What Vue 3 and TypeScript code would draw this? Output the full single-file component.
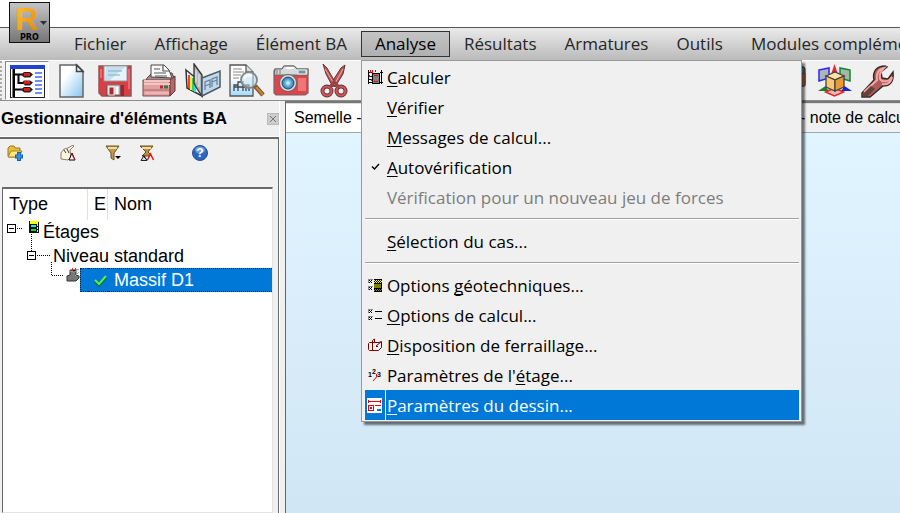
<script setup lang="ts">
import { ref } from 'vue'

interface MenuEntry {
  before: string
  key: string
  after: string
  icon?: string
  disabled?: boolean
}

const menus: string[] = ['Fichier', 'Affichage', 'Élément BA', 'Analyse', 'Résultats', 'Armatures', 'Outils', 'Modules compléments']
const openMenu = ref('Analyse')
const current = ref('dessin...')

const groups: MenuEntry[][] = [
  [
    { before: '', key: 'C', after: 'alculer', icon: 'calc' },
    { before: '', key: 'V', after: 'érifier' },
    { before: '', key: 'M', after: 'essages de calcul...' },
    { before: '', key: 'A', after: 'utovérification', icon: 'check' },
    { before: 'Vérification pour un nouveau jeu de forces', key: '', after: '', disabled: true },
  ],
  [{ before: '', key: 'S', after: 'élection du cas...' }],
  [
    { before: 'Options ', key: 'g', after: 'éotechniques...', icon: 'geo' },
    { before: '', key: 'O', after: 'ptions de calcul...', icon: 'options' },
    { before: '', key: 'D', after: 'isposition de ferraillage...', icon: 'rebar' },
    { before: "Paramètres de l'", key: 'é', after: 'tage...', icon: 'storey' },
    { before: '', key: 'P', after: 'aramètres du dessin...', icon: 'drawing' },
  ],
]

function isCurrent(entry: MenuEntry): boolean {
  return entry.after.endsWith(current.value)
}

function toggle(name: string): void {
  openMenu.value = openMenu.value === name ? '' : name
}
</script>

<template>
  <div class="app">
    <header class="title">
      <button class="logo" aria-label="Menu application">
        <svg viewBox="0 0 41 41" width="41" height="41" aria-hidden="true">
          <defs>
            <linearGradient id="logoBg" x1="0" y1="0" x2="0" y2="1">
              <stop offset="0" stop-color="#c6c6c6" /><stop offset="1" stop-color="#747474" />
            </linearGradient>
            <linearGradient id="logoR" x1="0" y1="0" x2="1" y2="1">
              <stop offset="0" stop-color="#ffc52e" /><stop offset=".5" stop-color="#f4a51c" /><stop offset="1" stop-color="#d98005" />
            </linearGradient>
          </defs>
          <rect x=".5" y=".5" width="40" height="40" fill="url(#logoBg)" stroke="#111" />
          <text x="6" y="28" class="logo-r" fill="url(#logoR)">R</text>
          <path d="M31 19h7l-3.500 4z" fill="#27313c" />
          <text x="11" y="38" class="logo-pro">PRO</text>
        </svg>
      </button>
    </header>

    <nav class="menubar">
      <div v-for="name in menus" :key="name" class="menu-slot">
        <button class="menu-button" :class="{ open: openMenu === name }" @click="toggle(name)">{{ name }}</button>
        <div v-if="name === 'Analyse' && openMenu === name" class="dropdown" role="menu">
          <div v-for="(group, g) in groups" :key="g" class="menu-group">
            <button
              v-for="entry in group"
              :key="entry.before + entry.key + entry.after"
              class="entry"
              :class="{ current: isCurrent(entry) }"
              :disabled="entry.disabled"
              role="menuitem"
            >
              <span class="entry-icon">
                <svg v-if="entry.icon === 'calc'" viewBox="0 0 15 15" width="15" height="15" shape-rendering="crispEdges">
                  <path d="M.5 0v14M13.500 0v14M0 2.500h4M12 2.500h3M0 6.500h4M0 9.500h4M0 12.500h15" stroke="#000" fill="none" />
                  <path d="M2.500 0v3M4.500 0v3M7.500 0v2M1.500 5v2M3.500 9v2" stroke="#e00" />
                  <rect x="4.500" y="3.500" width="7" height="10" fill="#808080" stroke="#000" />
                  <path d="M6 5.500h4M6 11.500h4" stroke="#e00" />
                </svg>
                <svg v-else-if="entry.icon === 'check'" viewBox="0 0 15 15" width="15" height="15">
                  <path d="M4 6.500l2.500 2.500L11 4" stroke="#000" stroke-width="1.400" fill="none" />
                </svg>
                <svg v-else-if="entry.icon === 'geo'" viewBox="0 0 15 15" width="15" height="15" shape-rendering="crispEdges">
                  <path d="M0 1.500h5M.5 1v4M0 8.500h5M.5 8v4" stroke="#888" />
                  <path d="M1 2l3 3M4 2l-3 3M1 9l3 3M4 9l-3 3" stroke="#000" />
                  <rect x="6" y="1" width="8" height="13" fill="#000" />
                  <path d="M6 2.500h8M6 4.500h8" stroke="#ff0" stroke-dasharray="1 1" />
                  <path d="M7 3.500h7" stroke="#ff0" stroke-dasharray="1 1" />
                  <rect x="6" y="6" width="7" height="4" fill="#808000" />
                  <path d="M7 11.500h7M6 12.500h8" stroke="#808000" stroke-dasharray="1 1" />
                </svg>
                <svg v-else-if="entry.icon === 'options'" viewBox="0 0 15 15" width="15" height="15" shape-rendering="crispEdges">
                  <path d="M0 1.500h5M.5 1v4M0 8.500h5M.5 8v4" stroke="#888" />
                  <path d="M1 2l3 3M4 2l-3 3M1 9l3 3M4 9l-3 3M7 3.500h7M7 10.500h7" stroke="#000" />
                </svg>
                <svg v-else-if="entry.icon === 'rebar'" viewBox="0 0 15 15" width="15" height="15">
                  <path d="M4.500 12V2.500l2-1.500v3M1.500 4.500H11l2.500-1v6l-3 3h-9l-1-1v-6zM8 8l5-4M8 8.500h2" stroke="#700" fill="none" />
                </svg>
                <svg v-else-if="entry.icon === 'storey'" viewBox="0 0 15 15" width="15" height="15">
                  <text x="0" y="9" class="digit">1</text>
                  <text x="4" y="6" class="digit">2</text>
                  <text x="9" y="9" class="digit">3</text>
                  <path d="M8.500 6v3L5 13" stroke="#e00" fill="none" />
                </svg>
                <svg v-else-if="entry.icon === 'drawing'" viewBox="0 0 15 15" width="15" height="15" shape-rendering="crispEdges">
                  <rect width="15" height="15" fill="#fff" />
                  <path d="M1 3.500h13M1.500 2v3M13.500 2v3M1 7.500h6M1 12.500h6M1.500 7v6M6.500 7v6M3.500 9.500h1v1h-1z" stroke="#e00" fill="none" />
                  <path d="M8 7.500h6" stroke="#e00" fill="none" />
                  <path d="M10 12h4" stroke="#0078d7" stroke-width="2" />
                </svg>
              </span>
              <span class="entry-text">{{ entry.before }}<u v-if="entry.key">{{ entry.key }}</u>{{ entry.after }}</span>
            </button>
          </div>
        </div>
      </div>
    </nav>

    <div class="toolbar" role="toolbar">
      <div class="tools">
        <button class="tool pressed" aria-label="Gestionnaire">
          <svg viewBox="0 0 36 36" width="36" height="36">
            <rect x="1.500" y="2.500" width="34" height="32" fill="#fff" stroke="#222" />
            <rect x="1" y="2" width="35" height="4" fill="#2342d0" />
            <path d="M3.500 6v29" stroke="#777" /><path d="M5 6v28M5 11.500h8M9.500 12v8h5M5 26.500h8" stroke="#000" stroke-width="2" fill="none" />
            <path d="M12 11.500l3-2.500h6l3 2.500-3 3h-6zM13 19.500l2-2h6l3 2-3 3h-5zM12 26.500l3-2.500h6l3 2.500-3 3h-6z" fill="#222" />
            <path d="M15 11.500h6M15 19.500h6M15 26.500h6" stroke="#e01818" stroke-width="3" />
            <path d="M26 10h7M26 14h7M26 18h7M26 22h7M26 26h7M26 30h7" stroke="#6f8ef0" stroke-width="2" />
          </svg>
        </button>
        <button class="tool" aria-label="Nouveau">
          <svg viewBox="0 0 36 36" width="36" height="36">
            <defs><linearGradient id="pg" x1="0" y1="0" x2="1" y2="1"><stop offset=".3" stop-color="#fff" /><stop offset="1" stop-color="#84c4ee" /></linearGradient></defs>
            <path d="M7 2h17l6 6v26H7z" fill="url(#pg)" stroke="#666" stroke-width="1.500" />
            <path d="M23.500 2v6.500H30z" fill="#eee" stroke="#444" stroke-width="1.500" />
          </svg>
        </button>
        <button class="tool" aria-label="Enregistrer">
          <svg viewBox="0 0 36 36" width="36" height="36">
            <path d="M2 3h32v30H5l-3-3z" fill="#db3d45" stroke="#8d585b" stroke-width="1.500" />
            <rect x="7" y="3" width="23" height="15" fill="#e6f4fb" stroke="#999" />
            <path d="M9 4h19l-15 13H8z" fill="#bfe1f3" /><path d="M11 8h14M11 12h12" stroke="#8fa9b5" />
            <path d="M4 6v9M32 6v20" stroke="#f67a7d" stroke-width="1.500" />
            <rect x="9" y="22" width="18" height="11" fill="#9f252c" /><rect x="10" y="22" width="13" height="10" fill="#d8d8d8" stroke="#777" />
            <rect x="12" y="24" width="5" height="8" fill="#aa2931" stroke="#eee" /><path d="M20 24v7" stroke="#fff" stroke-width="2" />
          </svg>
        </button>
        <button class="tool" aria-label="Imprimer">
          <svg viewBox="0 0 36 36" width="36" height="36">
            <path d="M6 15l5-5h20l3 7-4 4H4z" fill="#a68c8c" stroke="#554444" />
            <path d="M10 14V2h13l5 5 3 8z" fill="#fafafa" stroke="#444" /><path d="M22 2v6h6M13 6h6M13 10h12M14 13h12" stroke="#555" fill="none" stroke-width="1.200" />
            <path d="M2 17h27v16H2z" fill="#dfa09e" stroke="#71494b" /><path d="M29 17l5-4v15l-5 5z" fill="#b9666a" stroke="#613639" />
            <path d="M3 18h26M3 21h26" stroke="#f3c5c3" stroke-width="2" /><path d="M2 27h27" stroke="#a8676a" />
            <path d="M4 30h24" stroke="#f0b5b3" stroke-width="2" /><path d="M19 24h3" stroke="#c2222b" stroke-width="3" /><path d="M23 24h4" stroke="#198344" stroke-width="3" />
          </svg>
        </button>
        <button class="tool" aria-label="Présentation">
          <svg viewBox="0 0 36 36" width="36" height="36">
            <path d="M1 7l16 13v13L2 25z" fill="#eee" stroke="#333" stroke-width="1.500" />
            <path d="M4 12v13" stroke="#e44" stroke-width="2" /><path d="M6 14v13" stroke="#ee3" stroke-width="2" /><path d="M8 15v13" stroke="#4c5" stroke-width="2" /><path d="M10 17v12" stroke="#37dce0" stroke-width="2" />
            <path d="M9 1l8 11v21l-6-9-2-4z" fill="#aeb5ba" stroke="#333" stroke-width="1.300" /><path d="M11 7v12M14 11v13" stroke="#eee" />
            <path d="M17 15l18-7v16l-18 9z" fill="#c3d9ea" stroke="#4a5b68" stroke-width="1.500" />
            <path d="M20 27v-8l5-2v8M20 23l5-2M27 24v-8l5-2v8M27 19l5-2" stroke="#6684a0" fill="none" stroke-width="1.300" />
          </svg>
        </button>
        <button class="tool" aria-label="Aperçu">
          <svg viewBox="0 0 36 36" width="36" height="36">
            <defs><linearGradient id="pv" x1="0" y1="0" x2="0" y2="1"><stop offset=".4" stop-color="#fff" /><stop offset="1" stop-color="#a2daff" /></linearGradient></defs>
            <path d="M1 2h16l7 7v24H1z" fill="url(#pv)" stroke="#555" stroke-width="1.300" /><path d="M17 2v7h7" fill="#ddd" stroke="#333" />
            <path d="M4 6h9M4 9h11M4 12h8M4 15h6" stroke="#888" />
            <path d="M5 28v-6h4v-3h5v3h6v6M5 24h15M9 22v6M14 22v6M17 22v6" stroke="#444" stroke-width="1.300" fill="none" />
            <circle cx="20" cy="17" r="8" fill="#c8e2ee" fill-opacity=".55" stroke="#7b868e" stroke-width="1.800" />
            <path d="M15 16c1-4 5-5 8-3" stroke="#fff" stroke-width="1.500" fill="none" />
            <path d="M26 23l8 9" stroke="#73512d" stroke-width="4.500" /><path d="M27 24l7 8" stroke="#c08337" stroke-width="2.500" />
          </svg>
        </button>
        <button class="tool" aria-label="Capture">
          <svg viewBox="0 0 36 36" width="36" height="36">
            <defs><radialGradient id="lens"><stop offset="0" stop-color="#e8faff" /><stop offset=".5" stop-color="#69b4dc" /><stop offset="1" stop-color="#2c6ea8" /></radialGradient></defs>
            <path d="M2 6h7l2-3h10l3 3h11v24l-3 2H3l-2-2V8z" fill="#d9474c" stroke="#806063" stroke-width="1.200" />
            <path d="M2 6h7l2-3h10l3 3h11v6H1.500z" fill="#d3dad9" stroke="#666" />
            <path d="M12 6l1-2h7l2 2z" fill="#fff" /><rect x="25" y="7" width="8" height="4" fill="#7396a7" stroke="#eee" /><path d="M4 7v4M7 7v4" stroke="#777" />
            <path d="M25 15h8v13h-8z" fill="#ee7775" />
            <circle cx="15" cy="20" r="8.500" fill="#d7dde0" stroke="#715c60" /><circle cx="15" cy="20" r="6" fill="url(#lens)" stroke="#28506f" />
          </svg>
        </button>
        <button class="tool" aria-label="Couper">
          <svg viewBox="0 0 36 36" width="36" height="36">
            <path d="M6 1l4 4 8 14-2 5L9 11zM28 2l-4 3-9 14 3 5 8-13z" fill="#bd5559" stroke="#633437" />
            <path d="M8 6l8 13M26 6l-9 16" stroke="#ecaaaa" />
            <circle cx="10" cy="28" r="4.500" fill="none" stroke="#663337" stroke-width="4" /><circle cx="24" cy="28" r="4.500" fill="none" stroke="#663337" stroke-width="4" />
            <circle cx="10" cy="28" r="4.500" fill="none" stroke="#cf5558" stroke-width="2.200" /><circle cx="24" cy="28" r="4.500" fill="none" stroke="#cf5558" stroke-width="2.200" />
            <path d="M13 24l4-5 5 5" stroke="#9e3d42" stroke-width="3" fill="none" />
          </svg>
        </button>
      </div>
      <div class="tools">
        <button class="tool" aria-label="Affichage">
          <svg viewBox="0 0 36 36" width="36" height="36"><rect x="4" y="4" width="28" height="19" rx="2" fill="#59727b" stroke="#333" /><path d="M24 10h8v13h-8z" fill="#b47755" stroke="#543" /><path d="M29.500 5v5" stroke="#59b4c8" stroke-width="2" /></svg>
        </button>
        <button class="tool" aria-label="Vue 3D">
          <svg viewBox="0 0 36 36" width="36" height="36">
            <path d="M2 7l10-2v10L2 18z" fill="#aeb4be" stroke="#2929ee" stroke-width="1.500" /><path d="M33 7l-10-2v10l10 3z" fill="#a3b8a6" stroke="#158530" stroke-width="1.500" />
            <path d="M17.500 1l3 9h-6z" fill="#e1262d" /><path d="M1 28l9-6v4l4 2z" fill="#148427" /><path d="M35 28l-9-6v4l-3 2z" fill="#1b23d9" />
            <path d="M17.500 25l9 4-9 4-9-4z" fill="#f2b5b4" stroke="#e12226" stroke-width="1.500" />
            <path d="M9 13l9-4 9 4-9 4z" fill="#ffe2a4" stroke="#444" stroke-width="1.300" /><path d="M9 13l9 4v11l-9-4z" fill="#ffc673" stroke="#444" stroke-width="1.300" /><path d="M27 13l-9 4v11l9-4z" fill="#e99a32" stroke="#444" stroke-width="1.300" />
          </svg>
        </button>
        <button class="tool" aria-label="Préférences">
          <svg viewBox="0 0 36 36" width="36" height="36">
            <path d="M1 30l12-13c-2-9 3-14 11-14l2 1-6 5 1 6 6 1 5-7c1 10-3 14-10 14L9 34H1z" fill="#ae5c57" stroke="#382b2b" stroke-width="1.500" />
            <path d="M3 29l13-12c-1-7 2-11 7-12-4 4-5 7-4 11l2 2c4 1 8-1 10-4-1 6-5 8-10 7" stroke="#f4a6a7" stroke-width="2" fill="none" />
            <path d="M2 31l8-8 4 3-7 7H2z" fill="#65423b" />
          </svg>
        </button>
      </div>
    </div>

    <main class="workspace">
      <aside class="panel">
        <div class="panel-head">
          <h2>Gestionnaire d'éléments BA</h2>
          <button class="close" aria-label="Fermer"><svg viewBox="0 0 10 10" width="10" height="10"><path d="M2 2l6 6M8 2L2 8" stroke="#777" /></svg></button>
        </div>
        <div class="panel-body">
          <div class="mini-tools">
            <button class="mini" aria-label="Ajouter">
              <svg viewBox="0 0 16 16" width="16" height="16"><path d="M1 3l2-2h4l1 2h5v9H2l-1-1z" fill="#e6bd36" stroke="#9c7918" /><path d="M1 12l3-6h11l-3 6z" fill="#ffe985" stroke="#a9841d" /><path d="M12 7v9M8 11.500h8" stroke="#1464b4" stroke-width="4" /><path d="M12 8v7M9 11.500h6" stroke="#3b90de" stroke-width="2" /></svg>
            </button>
            <button class="mini far" aria-label="Sélectionner">
              <svg viewBox="0 0 16 16" width="16" height="16"><path d="M1 14V8l3-4 4-1 5-3 1 1-4 4 1 7-3 3z" fill="#fff5df" stroke="#8d836c" /><path d="M4 5l2 3M7 4l2 4" stroke="#333" /><path d="M9 15h6l-3-7z" fill="#fff" stroke="#000" /><path d="M11 8l4 7" stroke="#d11" /></svg>
            </button>
            <button class="mini near" aria-label="Filtrer">
              <svg viewBox="0 0 16 16" width="16" height="16"><path d="M1 1h13l-5 7v7l-3-2V8z" fill="#c19a4e" stroke="#6c5123" /><path d="M3 3h9" stroke="#f7dc9a" stroke-width="2" /><path d="M10 11h6l-3 3z" fill="#000" /></svg>
            </button>
            <button class="mini" aria-label="Supprimer le filtre">
              <svg viewBox="0 0 16 16" width="16" height="16"><path d="M1 1h13l-5 6 4 4H3l4-4z" fill="#b88d40" stroke="#654c21" /><path d="M3 3h9" stroke="#f7dc9a" stroke-width="2" /><path d="M2 15.500l3-5 3 5zM3 10l5 5" fill="#ddd" stroke="#222" /><path d="M8.500 15l3-6 3 6" stroke="#e11" stroke-width="1.500" fill="#fff" /></svg>
            </button>
            <button class="mini far" aria-label="Aide">
              <svg viewBox="0 0 16 16" width="16" height="16"><circle cx="8" cy="8" r="7.500" fill="#2c66be" stroke="#244f94" /><ellipse cx="8" cy="5" rx="5" ry="3.500" fill="#6f9de0" /><text x="8" y="12" class="help">?</text></svg>
            </button>
          </div>
          <table class="tree">
            <thead><tr><th>Type</th><th>E</th><th>Nom</th></tr></thead>
            <tbody>
              <tr>
                <td colspan="3">
                  <div class="node">
                    <svg viewBox="0 0 40 24" width="40" height="24" shape-rendering="crispEdges">
                      <path d="M4.500 4.500h8v8h-8z" fill="#fff" stroke="#000" /><path d="M6 8.500h5" stroke="#000" />
                      <path d="M14 8.500h6M28.500 14v10" stroke="#000" stroke-dasharray="1 1" />
                      <path d="M26 1h10v12H26z" fill="#111" /><path d="M27 1h9l-1 3h-8z" fill="#ff0" /><path d="M28 5h5v2h-5z" fill="#0ef" /><path d="M28 9h5v2h-5z" fill="#0d4" /><path d="M34.500 4v9" stroke="#ddd" stroke-dasharray="2 1" />
                    </svg>
                    <span>Étages</span>
                  </div>
                </td>
              </tr>
              <tr>
                <td colspan="3">
                  <div class="node">
                    <svg viewBox="0 0 50 24" width="50" height="24" shape-rendering="crispEdges">
                      <path d="M28.500 0v7M34 11.500h13M48.500 18v6" stroke="#000" stroke-dasharray="1 1" />
                      <path d="M24.500 7.500h8v8h-8z" fill="#fff" stroke="#000" /><path d="M26 11.500h5" stroke="#000" />
                    </svg>
                    <span>Niveau standard</span>
                  </div>
                </td>
              </tr>
              <tr class="selected">
                <td>
                  <div class="node">
                    <svg viewBox="0 0 77 24" width="77" height="24">
                      <path d="M48.500 0v7M49 7.500h11" stroke="#000" stroke-dasharray="1 1" shape-rendering="crispEdges" />
                      <path d="M64 8l3-1V2h6v5l3 1v2l-3 3h-9z" fill="#777" stroke="#333" /><path d="M67 3l4 1 5-3M72 8l4-4" stroke="#aaa" /><path d="M69.500 0v3M72.500 0v3" stroke="#e22" />
                    </svg>
                    <span class="fill"></span>
                  </div>
                </td>
                <td><svg viewBox="0 0 14 14" width="14" height="14"><path d="M1 8l4 4 7-8" stroke="#176b28" stroke-width="3" fill="none" /><path d="M1 7l4 4 7-8" stroke="#55ef55" stroke-width="2" fill="none" /></svg></td>
                <td>Massif D1</td>
              </tr>
            </tbody>
          </table>
        </div>
      </aside>
      <section class="document">
        <div class="tabs">
          <button class="tab active">Semelle -</button>
          <button class="tab">- note de calcul</button>
        </div>
        <div class="canvas"></div>
      </section>
    </main>
  </div>
</template>

<style>
body {
  overflow: hidden;
  background: #f0f0f0;
}
</style>

<style scoped>
.app {
  display: flex;
  flex-direction: column;
  height: 100vh;
  overflow: hidden;
  color: #000;
  font-family: "Liberation Sans", Arial, sans-serif;
}

button {
  padding: 0;
  border: 0;
  background: none;
  color: inherit;
  font: inherit;
}

svg {
  display: block;
  flex: none;
}

.title {
  position: relative;
  flex: none;
  height: 27px;
  background: #fff;
  border-bottom: 1px solid #555;
}

.logo {
  position: absolute;
  top: 2px;
  left: 9px;
  z-index: 2;
}

.logo-r {
  font: bold 32px "Liberation Sans", sans-serif;
}

.logo-pro {
  font: bold 8px "DejaVu Sans", sans-serif;
}

.digit {
  font: bold 7px "Liberation Sans", sans-serif;
}

.help {
  fill: #fff;
  font: bold 12px "Liberation Sans", sans-serif;
  text-anchor: middle;
}

.menubar {
  display: flex;
  flex: none;
  height: 32px;
  box-sizing: border-box;
  padding: 3px 0 3px 60px;
  background: linear-gradient(#eaeaea, #bababa);
  font-family: "Open Sans", "Segoe UI", sans-serif;
  font-size: 17px;
}

.menu-slot {
  position: relative;
  flex: none;
}

.menu-button {
  height: 26px;
  padding: 0 13px;
  border: 1px solid transparent;
  color: #262626;
  line-height: 24px;
  white-space: nowrap;
}

.menu-button.open {
  border-color: #333;
  background: linear-gradient(#c4c4c4, #b0b0b0);
  color: #000;
}

.dropdown {
  position: absolute;
  top: 29px;
  left: 0;
  z-index: 3;
  box-sizing: border-box;
  width: 441px;
  padding: 1px 2px 1px 3px;
  border: 1px solid #999;
  background: #f0f0f0;
  box-shadow: 3px 3px 2px #0008;
}

.menu-group + .menu-group::before {
  content: "";
  display: block;
  height: 1px;
  margin: 6px 0;
  border-top: 1px solid #a0a0a0;
  background: #fff;
}

.entry {
  display: flex;
  align-items: center;
  width: 100%;
  height: 30px;
  text-align: left;
  white-space: nowrap;
}

.entry:disabled {
  color: #7d7d7d;
}

.entry-icon {
  display: flex;
  align-items: center;
  justify-content: center;
  width: 21px;
  height: 30px;
  margin-right: 1px;
}

.entry.current {
  background: #0078d7;
  color: #fff;
}

.current .entry-icon {
  box-sizing: border-box;
  border-right: 1px solid #fff;
}

u {
  text-decoration-thickness: 1px;
  text-decoration-skip-ink: none;
  text-underline-offset: 2px;
}

.toolbar {
  display: flex;
  flex: none;
  gap: 412px;
  height: 41px;
  box-sizing: border-box;
  overflow: hidden;
  border-top: 1px solid #fff;
  border-bottom: 1px solid #8c8c8c;
}

.toolbar::before {
  content: "";
  flex: none;
  width: 3px;
  margin-right: -412px;
  border-left: 2px dotted #aaa;
}

.tools {
  display: flex;
  flex: none;
}

.tool {
  display: flex;
  align-items: center;
  justify-content: center;
  width: 44px;
  height: 39px;
}

.tool.pressed {
  box-sizing: border-box;
  border: 1px solid #fff;
  border-top-color: #888;
  border-left-color: #888;
  background: #f9f9f9;
}

.workspace {
  display: flex;
  flex: 1;
  min-height: 0;
}

.panel {
  display: flex;
  flex: none;
  flex-direction: column;
  width: 279px;
  margin-right: 5px;
  border-right: 1px solid #fff;
}

.panel-head {
  display: flex;
  flex: none;
  align-items: center;
  justify-content: space-between;
  height: 35px;
  padding: 0 0 0 1px;
  border-bottom: 1px solid #fff;
}

h2 {
  margin: 0;
  font-size: 17px;
  font-weight: bold;
  white-space: nowrap;
}

.close {
  border: 1px solid #bbb;
  background: #ccc;
}

.panel-body {
  display: flex;
  flex: 1;
  flex-direction: column;
  padding: 0 5px 0 2px;
  border-top: 2px solid #696969;
  border-right: 1px solid #696969;
}

.mini-tools {
  display: flex;
  flex: none;
  gap: 18px;
  height: 42px;
  padding: 6px 5px 0;
}

.mini {
  height: 16px;
}

.far {
  margin-left: 19px;
}

.near {
  margin-left: 11px;
}

.tree {
  width: 100%;
  flex: 1;
  display: block;
  box-sizing: border-box;
  border: 1px solid #e3e3e3;
  border-top: 2px solid #696969;
  border-left: 1px solid #696969;
  background: #fff;
  border-spacing: 0;
  font-size: 18px;
}

.tree thead,
.tree tbody {
  display: block;
}

.tree tr {
  display: grid;
  grid-template-columns: 85px 20px 1fr;
}

.tree td[colspan] {
  grid-column: 1 / -1;
}

.tree th {
  padding: 0 6px;
  border-right: 1px solid #e0e0e0;
  font-weight: normal;
  line-height: 31px;
  text-align: left;
}

.tree th:last-child {
  border-right: 0;
}

.tree td {
  padding: 0;
  line-height: 24px;
}

.node {
  display: flex;
  align-items: center;
  height: 24px;
  white-space: nowrap;
}

.fill {
  flex: 1;
  box-sizing: border-box;
  height: 24px;
  border: 1px dotted #123;
  border-right: 0;
  background: #0078d7;
}

.selected td + td {
  display: flex;
  align-items: center;
  box-sizing: border-box;
  height: 24px;
  padding-left: 6px;
  border: 1px dotted #123;
  border-width: 1px 0;
  background: #0078d7;
  color: #fff;
}

.document {
  display: flex;
  flex: 1;
  flex-direction: column;
  min-width: 0;
  border-top: 2px solid #777;
  border-left: 1px solid #666;
}

.tabs {
  display: flex;
  flex: none;
  height: 29px;
  overflow: hidden;
  border-bottom: 1px solid #9ab;
}

.tab {
  flex: none;
  padding: 0 8px;
  border-top: 1px solid #ddd;
  font-size: 16px;
  text-align: left;
  white-space: nowrap;
}

.tab.active {
  width: 506px;
  background: #fff;
}

.canvas {
  flex: 1;
  background: linear-gradient(#e0f5ff, #d1e6f4);
}
</style>
